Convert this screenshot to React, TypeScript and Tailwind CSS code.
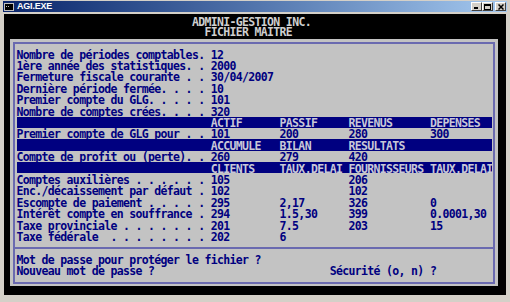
import React from 'react';

type Part = [number, string];
type Row = { kind: 'text' | 'bar' | 'sep'; parts?: Part[] };

// builds a fixed-width console line, columns are absolute (content starts at col 2)
const line = (parts: Part[], start = 2) => {
    let s = '';
    for (const [col, text] of parts) {
        s = s.padEnd(col - start) + text;
    }
    return s;
};

const rows: Row[] = [
    { kind: 'text', parts: [[2, 'Nombre de périodes comptables. 12']] },
    { kind: 'text', parts: [[2, '1ère année des statistiques. . 2000']] },
    { kind: 'text', parts: [[2, 'Fermeture fiscale courante . . 30/04/2007']] },
    { kind: 'text', parts: [[2, 'Dernière période fermée. . . . 10']] },
    { kind: 'text', parts: [[2, 'Premier compte du GLG. . . . . 101']] },
    { kind: 'text', parts: [[2, 'Nombre de comptes crées. . . . 320']] },
    { kind: 'bar', parts: [[33, 'ACTIF'], [44, 'PASSIF'], [55, 'REVENUS'], [68, 'DEPENSES']] },
    { kind: 'text', parts: [[2, 'Premier compte de GLG pour . . 101'], [44, '200'], [55, '280'], [68, '300']] },
    { kind: 'bar', parts: [[33, 'ACCUMULE'], [44, 'BILAN'], [55, 'RESULTATS']] },
    { kind: 'text', parts: [[2, 'Compte de profit ou (perte). . 260'], [44, '279'], [55, '420']] },
    { kind: 'bar', parts: [[33, 'CLIENTS'], [44, 'TAUX,DELAI'], [55, 'FOURNISSEURS'], [68, 'TAUX,DELAI']] },
    { kind: 'text', parts: [[2, 'Comptes auxilières . . . . . . 105'], [55, '206']] },
    { kind: 'text', parts: [[2, 'Enc./décaissement par défaut . 102'], [55, '102']] },
    { kind: 'text', parts: [[2, 'Escompte de paiement . . . . . 295'], [44, '2,17'], [55, '326'], [68, '0']] },
    { kind: 'text', parts: [[2, 'Intérêt compte en souffrance . 294'], [44, '1.5,30'], [55, '399'], [68, '0.0001,30']] },
    { kind: 'text', parts: [[2, 'Taxe provinciale . . . . . . . 201'], [44, '7.5'], [55, '203'], [68, '15']] },
    { kind: 'text', parts: [[2, 'Taxe fédérale  . . . . . . . . 202'], [44, '6']] },
    { kind: 'sep' },
    { kind: 'text', parts: [[2, 'Mot de passe pour protéger le fichier ?']] },
    { kind: 'text', parts: [[2, 'Nouveau mot de passe ?'], [52, 'Sécurité (o, n) ?']] },
];

const WinButton = ({ children, className = '' }: { children: React.ReactNode; className?: string }) => (
    <div className={`w-[11px] h-[9px] bg-[#d4d0c8] border-t border-l border-white border-r border-b border-r-[#404040] border-b-[#404040] flex items-center justify-center ${className}`}>
        {children}
    </div>
);

export default function App() {
    const mono = "font-['DejaVu_Sans_Mono','Liberation_Mono',monospace] font-bold text-[11.5px] tracking-[-0.66px] leading-[11.4px] whitespace-pre";

    return (
        <div className="w-[510px] h-[302px] bg-[#d4d0c8] pt-[1px] px-[3px] overflow-hidden">
            {/* title bar */}
            <div className="h-[11px] flex items-center bg-gradient-to-r from-[#0a246a] to-[#a6caf0] pl-[1px] pr-[1px]">
                <svg width="10" height="8" viewBox="0 0 10 8" className="mr-[3px]">
                    <rect x="0" y="0" width="10" height="8" fill="#c0c0c0" />
                    <rect x="1" y="1" width="8" height="6" fill="#000" />
                    <rect x="2" y="3" width="1" height="1" fill="#c0c0c0" />
                    <rect x="4" y="3" width="1" height="1" fill="#c0c0c0" />
                </svg>
                <span className="font-['Liberation_Sans',sans-serif] font-bold text-[9px] leading-none text-white tracking-[-0.2px]">AGI.EXE</span>
                <div className="ml-auto flex items-center">
                    <WinButton>
                        <svg width="5" height="5" viewBox="0 0 5 5"><rect x="0" y="3" width="4" height="2" fill="#000" /></svg>
                    </WinButton>
                    <WinButton>
                        <svg width="7" height="6" viewBox="0 0 7 6"><rect x="0.5" y="0.5" width="6" height="5" fill="none" stroke="#000" /><rect x="0" y="0" width="7" height="2" fill="#000" /></svg>
                    </WinButton>
                    <WinButton className="ml-[2px]">
                        <svg width="6" height="6" viewBox="0 0 6 6"><path d="M0.5 0.5L5.5 5.5M5.5 0.5L0.5 5.5" stroke="#000" strokeWidth="1.5" /></svg>
                    </WinButton>
                </div>
            </div>

            {/* console */}
            <div className="mt-[2px] ml-[1px] w-[502px] h-[281px] bg-black flex flex-col">
                <div className={`${mono} text-[#cfcfcf] h-[11.4px] pt-[2.5px]`}>{line([[30, 'ADMINI-GESTION INC.']], 0)}</div>
                <div className={`${mono} text-[#cfcfcf] h-[11.4px] pt-[2px]`}>{line([[32, 'FICHIER MAITRE']], 0)}</div>

                <div className="ml-[6px] w-[488px] mt-[2px] bg-[#c3c3c3] pt-[3px] px-[3px] pb-[2px]">
                    <div className="border-2 border-[#6a6ab0] pt-[4.4px] pb-[6px] pl-[1.5px]">
                        {rows.map((row, i) => {
                            if (row.kind === 'sep') {
                                return (
                                    <div key={i} className="h-[11.4px] flex items-center -ml-[1.5px]">
                                        <div className="w-full h-[2px] bg-[#6a6ab0]" />
                                    </div>
                                );
                            }
                            const bar = row.kind === 'bar';
                            return (
                                <div
                                    key={i}
                                    className={`${mono} h-[11.4px] w-[475.8px] pt-[1.5px] ${bar ? 'bg-[#000080] text-[#c8c8d8]' : 'text-[#000080]'}`}
                                >
                                    {line(row.parts ?? [])}
                                </div>
                            );
                        })}
                    </div>
                </div>
            </div>
        </div>
    );
}
